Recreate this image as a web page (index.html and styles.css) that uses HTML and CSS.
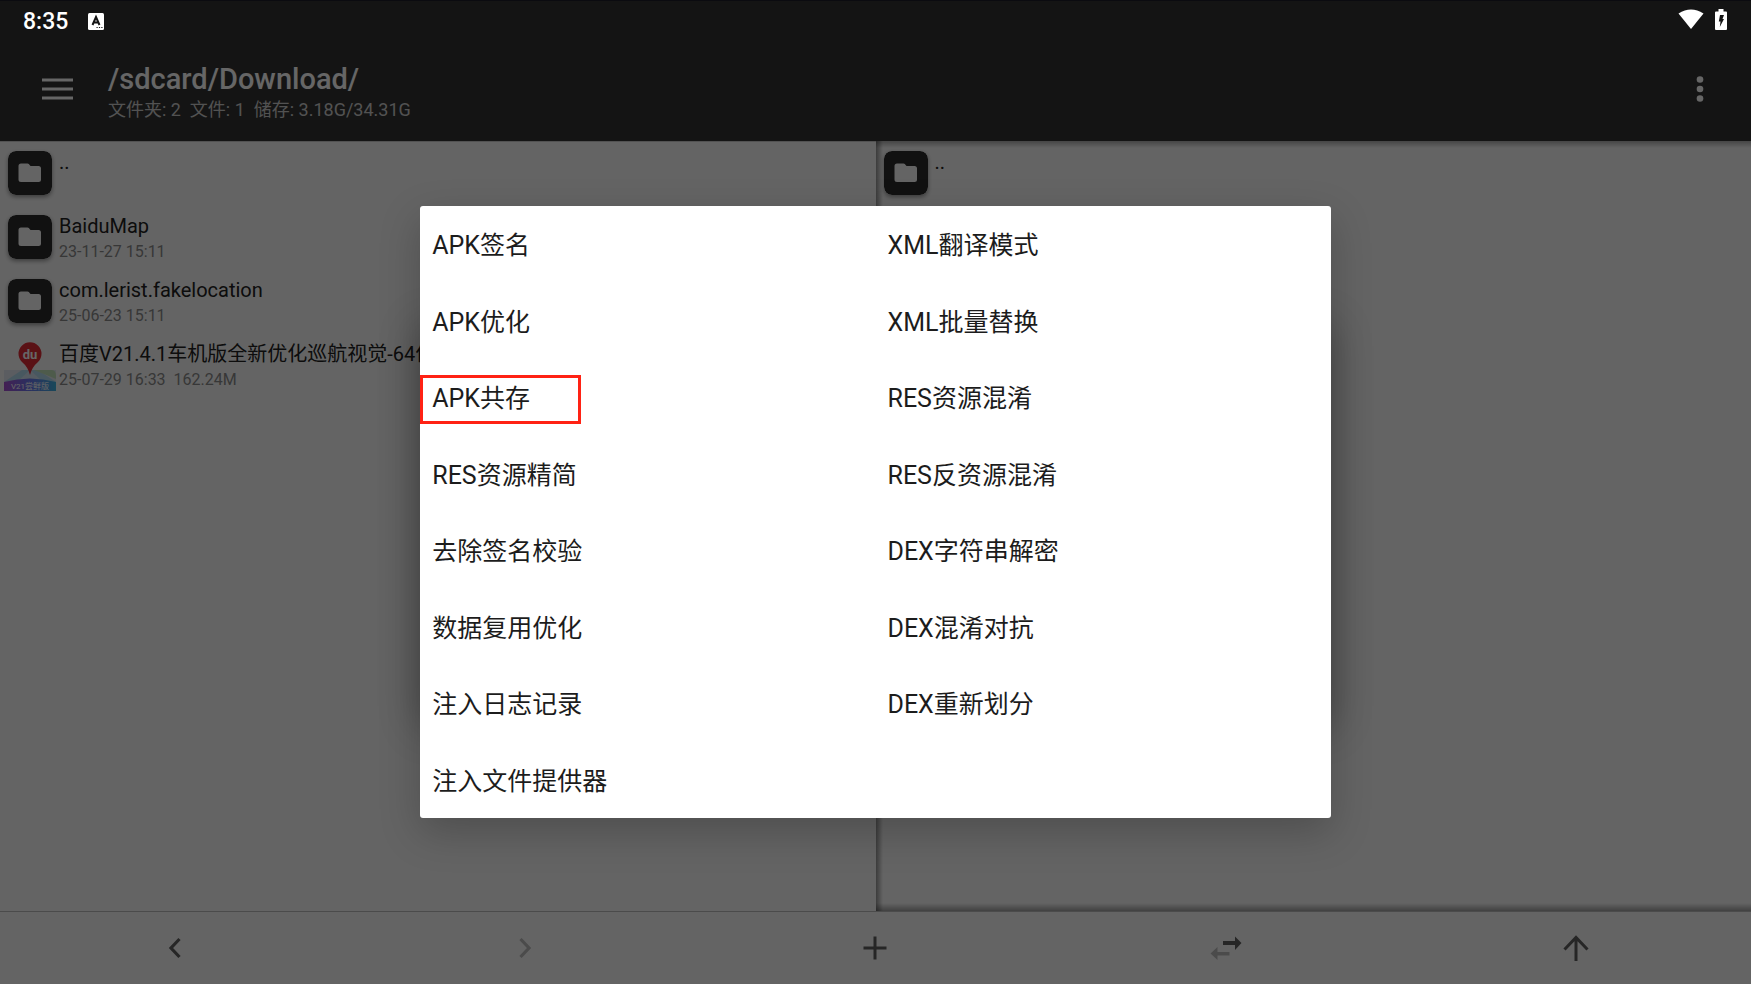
FILE: index.html
```
<!DOCTYPE html>
<html lang="zh-CN">
<head>
    <meta charset="UTF-8">
    <meta name="viewport" content="width=device-width, initial-scale=1.0">
    <title>/sdcard/Download/</title>
    <link rel="stylesheet" href="styles.css">
</head>
<body>
    <svg class="defs" width="0" height="0" aria-hidden="true">
        <symbol id="folder" viewBox="0 0 44 44">
            <rect width="44" height="44" rx="8" fill="#2b2b2b"/>
            <path d="M13 12.500h6.500q.8 0 1.300.6l1.700 2h8q2.500 0 2.500 2.500v10.800q0 2.500-2.500 2.500h-17.500q-2.500 0-2.500-2.500v-13.400q0-2.500 2.500-2.500z" fill="#fafafa"/>
        </symbol>
    </svg>

    <div class="status">
        <span class="clock">8:35</span>
        <svg class="keyboard" width="16" height="17" viewBox="0 0 16 17">
            <rect width="16" height="17" rx="1.500" fill="#fff"/>
            <path d="M4.500 12L8 4l3.500 8M5.800 9.600h4.400" fill="none" stroke="#141414" stroke-width="2"/>
            <path d="M8.500 14.500h1.200M10.900 14.500h1.200M13.300 14.500h1.200" stroke="#141414" stroke-width="1.200"/>
        </svg>
        <span class="statusRight">
            <svg width="26" height="20" viewBox="0 0 26 20"><path d="M.5 4.500Q13-3.500 25.500 4.500L13 20z" fill="#fff"/></svg>
            <svg width="12" height="21" viewBox="0 0 12 21">
                <path d="M3.500 0h5v2.500H11q1 0 1 1V20q0 1-1 1H1q-1 0-1-1V3.500q0-1 1-1h2.500z" fill="#fff"/>
                <path d="M5 6h4L7.500 10H9L4.800 18l.7-5.500H3.800z" fill="#141414"/>
            </svg>
        </span>
    </div>

    <div class="app">
        <header>
            <button class="menuBtn" aria-label="菜单">
                <svg width="31" height="22" viewBox="0 0 31 22"><path d="M0 2h31M0 11h31M0 20h31" stroke="#fff" stroke-width="3"/></svg>
            </button>
            <div class="heading">
                <h1>/sdcard/Download/</h1>
                <p>文件夹: 2&nbsp; 文件: 1&nbsp; 储存: 3.18G/34.31G</p>
            </div>
            <button class="moreBtn" aria-label="更多">
                <svg width="8" height="26" viewBox="0 0 8 26" fill="#fff"><circle cx="4" cy="3.500" r="3.300"/><circle cx="4" cy="13" r="3.300"/><circle cx="4" cy="22.500" r="3.300"/></svg>
            </button>
        </header>

        <main>
            <ul class="pane">
                <li>
                    <svg class="icon"><use href="#folder"/></svg>
                    <div><p class="name">..</p></div>
                </li>
                <li>
                    <svg class="icon"><use href="#folder"/></svg>
                    <div><p class="name">BaiduMap</p><p class="date">23-11-27 15:11</p></div>
                </li>
                <li>
                    <svg class="icon"><use href="#folder"/></svg>
                    <div><p class="name">com.lerist.fakelocation</p><p class="date">25-06-23 15:11</p></div>
                </li>
                <li>
                    <svg class="icon apk" viewBox="0 0 52 52">
                        <defs>
                            <linearGradient id="band"><stop offset="0" stop-color="#a84fd0"/><stop offset=".5" stop-color="#6a78f0"/><stop offset="1" stop-color="#3fb4e0"/></linearGradient>
                        </defs>
                        <path d="M0 31h52v12H0z" fill="#e4e9f2"/>
                        <path d="M0 43L18 31h16l18 12z" fill="#b4dcf0"/>
                        <path d="M30 31h18q4 0 4 6v3z" fill="#c4e4bc"/>
                        <path d="M26 31L14 42h24z" fill="#d4e6f4"/>
                        <path d="M0 43Q26 36 52 43V52H0z" fill="url(#band)"/>
                        <path d="M26 36Q24 28 18 23A11.500 11.500 0 1 1 34 23Q28 28 26 36z" fill="#e02c36"/>
                        <text x="26" y="20" class="du">du</text>
                        <text x="26" y="50" class="ver">V21尝鲜版</text>
                    </svg>
                    <div><p class="name">百度V21.4.1车机版全新优化巡航视觉-64位</p><p class="date">25-07-29 16:33&nbsp; 162.24M</p></div>
                </li>
            </ul>
            <ul class="pane right">
                <li>
                    <svg class="icon"><use href="#folder"/></svg>
                    <div><p class="name">..</p></div>
                </li>
            </ul>
        </main>

        <nav>
            <button aria-label="后退"><svg viewBox="0 0 32 32"><path d="M20.500 7L12 16l8.500 9" stroke-width="3.200"/></svg></button>
            <button aria-label="前进" disabled><svg viewBox="0 0 32 32"><path d="M11.500 7L20 16l-8.500 9" stroke-width="3.200"/></svg></button>
            <button aria-label="新建"><svg viewBox="0 0 32 32"><path d="M16 4.500v23M4.500 16h23" stroke-width="3"/></svg></button>
            <button aria-label="同步"><svg viewBox="0 0 32 32"><path class="solid" d="M13 9h12V4.500L31.500 11 25 18v-5H13z"/><path class="solid faint" d="M19.500 20H7.500V15L.5 21.500 7.500 28v-4.500h12z"/></svg></button>
            <button aria-label="上级"><svg viewBox="0 0 32 32"><path d="M16 29V6M4.500 17.500L16 5.500l11.500 12" stroke-width="3"/></svg></button>
        </nav>
    </div>

    <div class="overlay">
        <div class="behind"></div>
        <div class="dialog" role="dialog" aria-label="APK功能">
            <button>APK签名</button>
            <button>XML翻译模式</button>
            <button>APK优化</button>
            <button>XML批量替换</button>
            <button class="marked">APK共存</button>
            <button>RES资源混淆</button>
            <button>RES资源精简</button>
            <button>RES反资源混淆</button>
            <button>去除签名校验</button>
            <button>DEX字符串解密</button>
            <button>数据复用优化</button>
            <button>DEX混淆对抗</button>
            <button>注入日志记录</button>
            <button>DEX重新划分</button>
            <button>注入文件提供器</button>
        </div>
    </div>
</body>
</html>
```
FILE: styles.css
```
*{
    box-sizing: border-box;
    margin: 0;
    padding: 0;
}
body{
    font-family: Roboto, "Noto Sans CJK SC", sans-serif;
    background-color: #fafafa;
}
button{
    border: none;
    background: none;
    font-family: inherit;
    color: inherit;
}
.defs{
    position: absolute;
}
svg{
    display: block;
}
.app{
    min-height: 100vh;
    display: flex;
    flex-direction: column;
}

/* status bar, stays bright above the scrim */
.status{
    position: absolute;
    top: 0;
    left: 0;
    right: 0;
    z-index: 2;
    height: 40px;
    padding: 2px 24px 0 23px;
    border-top: 1px solid #0b0b10;
    display: flex;
    align-items: center;
    color: white;
}
.clock{
    font-size: 23px;
    font-weight: 500;
}
.keyboard{
    margin-left: 20px;
}
.statusRight{
    margin-left: auto;
    display: flex;
    gap: 11px;
    padding-bottom: 4px;
}

header{
    height: 141px;
    padding: 40px 47px 4px 42px;
    background-color: #333;
    color: white;
    display: flex;
    align-items: center;
}
.heading{
    margin-left: 35px;
    padding-top: 8px;
    flex: 1;
}
.heading h1{
    font-size: 29px;
    line-height: 34px;
    font-weight: 500;
}
.heading p{
    font-size: 18px;
    line-height: 28px;
    color: #ccc;
}

main{
    flex: 1;
    display: grid;
    grid-template-columns: 1fr 1fr;
}
.pane{
    list-style: none;
    min-width: 0;
    box-shadow: inset 0 1px #ccc;
}
.right{
    box-shadow: none;
    background:
        linear-gradient(to right, rgba(0, 0, 0, 0.4), transparent) left / 7px 100% no-repeat,
        linear-gradient(to bottom, rgba(0, 0, 0, 0.3), transparent) top / 100% 7px no-repeat,
        linear-gradient(to top, rgba(0, 0, 0, 0.35), transparent) bottom / 100% 8px no-repeat;
}
.pane li{
    height: 64px;
    padding-left: 8px;
    display: flex;
    align-items: center;
    gap: 7px;
}
.pane li div{
    height: 50px;
    min-width: 0;
}
.icon{
    width: 44px;
    height: 44px;
    flex: none;
    border-radius: 8px;
    box-shadow: 0 2px 4px rgba(0, 0, 0, 0.4);
}
.apk{
    width: 52px;
    height: 52px;
    margin: 0 -4px;
    border-radius: 0;
    box-shadow: none;
}
.du{
    font-size: 13px;
    font-weight: bold;
    fill: white;
    text-anchor: middle;
}
.ver{
    font-size: 8px;
    fill: white;
    text-anchor: middle;
}
.name{
    font-size: 20px;
    line-height: 29px;
    color: #222;
    white-space: nowrap;
}
.date{
    font-size: 16px;
    line-height: 22px;
    color: #8a8a8a;
}

nav{
    height: 73px;
    border-top: 1px solid #bbb;
    display: grid;
    grid-template-columns: repeat(5, 1fr);
}
nav button{
    display: flex;
    align-items: center;
    justify-content: center;
}
nav svg{
    width: 32px;
    height: 32px;
    fill: none;
    stroke: #606060;
}
nav button:disabled svg{
    stroke: #bbb;
}
nav .solid{
    fill: #606060;
    stroke: none;
}
nav .faint{
    fill: #bbb;
}

.overlay{
    position: absolute;
    inset: 0;
    padding-top: 40px;
    background-color: rgba(0, 0, 0, 0.6);
    display: grid;
    place-items: center;
}
.overlay > div{
    grid-area: 1 / 1;
    width: 52%;
}
/* earlier menu, hidden under the dialog except for its shadow */
.behind{
    height: 400px;
    border-radius: 3px;
    box-shadow: 0 14px 40px rgba(0, 0, 0, 0.3);
}
.dialog{
    z-index: 1;
    min-height: 612px;
    background-color: white;
    border-radius: 3px;
    box-shadow: 0 14px 40px rgba(0, 0, 0, 0.22);
    display: grid;
    grid-template-columns: 1fr 1fr;
    grid-auto-rows: 1fr;
}
.dialog button{
    position: relative;
    padding: 0 0 2px 12px;
    font-size: 25px;
    text-align: left;
    color: #1c1c1c;
}
.marked::after{
    content: "";
    box-sizing: border-box;
    position: absolute;
    left: 0;
    top: 16px;
    width: 161px;
    height: 49px;
    border: 3px solid #ff2214;
}
```
